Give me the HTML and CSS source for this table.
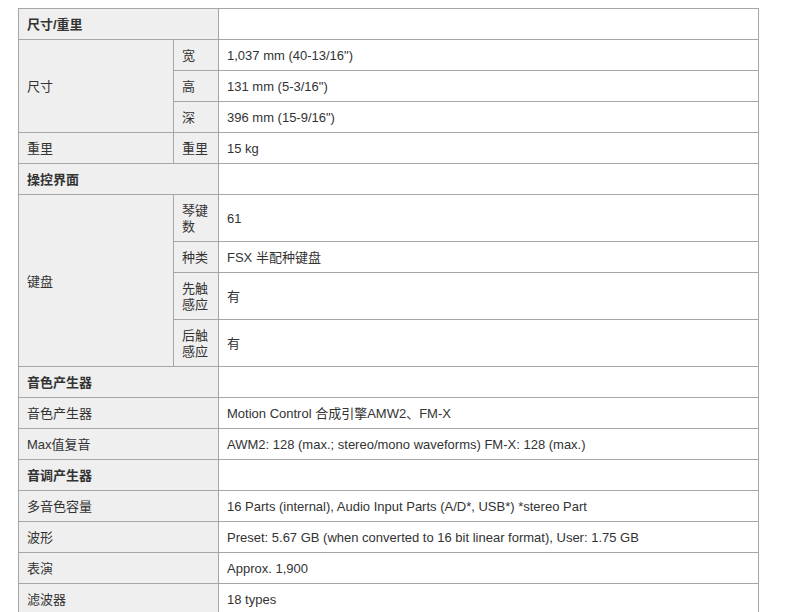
FILE: index.html
```html
<!DOCTYPE html>
<html lang="zh-CN">
<head>
<meta charset="utf-8">
<title>规格</title>
<link rel="stylesheet" href="styles.css">
</head>
<body>
<table class="spec">
  <colgroup>
    <col class="c1">
    <col class="c2">
    <col class="c3">
  </colgroup>
  <tbody>
    <tr><th class="hd" colspan="2">尺寸/重里</th><td></td></tr>
    <tr><th rowspan="3">尺寸</th><th>宽</th><td>1,037 mm (40-13/16")</td></tr>
    <tr><th>高</th><td>131 mm (5-3/16")</td></tr>
    <tr><th>深</th><td>396 mm (15-9/16")</td></tr>
    <tr><th>重里</th><th>重里</th><td>15 kg</td></tr>
    <tr><th class="hd" colspan="2">操控界面</th><td></td></tr>
    <tr><th rowspan="4">键盘</th><th>琴键数</th><td>61</td></tr>
    <tr><th>种类</th><td>FSX 半配种键盘</td></tr>
    <tr><th>先触感应</th><td>有</td></tr>
    <tr><th>后触感应</th><td>有</td></tr>
    <tr><th class="hd" colspan="2">音色产生器</th><td></td></tr>
    <tr><th colspan="2">音色产生器</th><td>Motion Control 合成引擎AMW2、FM-X</td></tr>
    <tr><th colspan="2">Max值复音</th><td>AWM2: 128 (max.; stereo/mono waveforms) FM-X: 128 (max.)</td></tr>
    <tr><th class="hd" colspan="2">音调产生器</th><td></td></tr>
    <tr><th colspan="2">多音色容量</th><td>16 Parts (internal), Audio Input Parts (A/D*, USB*) *stereo Part</td></tr>
    <tr><th colspan="2">波形</th><td>Preset: 5.67 GB (when converted to 16 bit linear format), User: 1.75 GB</td></tr>
    <tr><th colspan="2">表演</th><td>Approx. 1,900</td></tr>
    <tr><th colspan="2">滤波器</th><td>18 types</td></tr>
  </tbody>
</table>
</body>
</html>
```
FILE: styles.css
```css
html, body {
  margin: 0;
  padding: 0;
  background: #ffffff;
}
body {
  padding: 8px 0 0 18px;
  font-family: "Liberation Sans", Arial, "Noto Sans CJK SC", sans-serif;
  font-size: 13px;
  color: #333333;
}
.spec {
  border-collapse: collapse;
  table-layout: fixed;
  width: 740px;
}
.c1 { width: 155px; }
.c2 { width: 45px; }
.c3 { width: 540px; }
.spec th,
.spec td {
  border: 1px solid #a6a6a6;
  padding: 8px 8px 6px;
  line-height: 16px;
  text-align: left;
  vertical-align: middle;
  font-weight: normal;
}
.spec th {
  background: #efefef;
}
.spec td {
  background: #ffffff;
}
.spec th.hd {
  font-weight: bold;
}
```
